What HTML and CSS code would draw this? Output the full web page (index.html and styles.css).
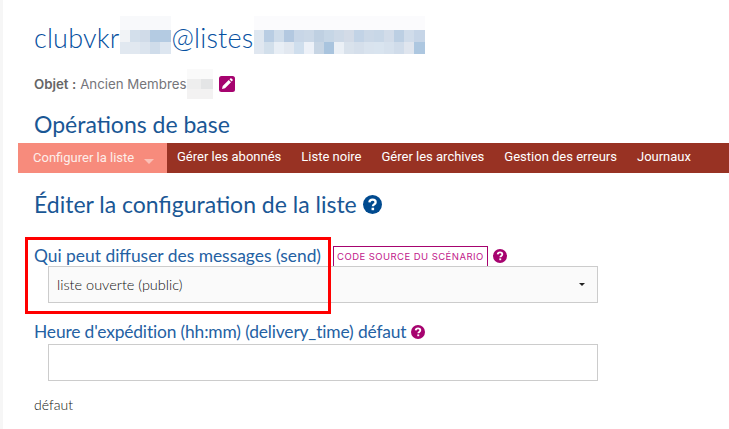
FILE: index.html
```html
<!DOCTYPE html>
<html lang="fr">
  <head>
    <meta charset="UTF-8" />
    <meta name="viewport" content="width=device-width, initial-scale=1" />
    <title>Éditer la configuration de la liste</title>
    <link rel="stylesheet" href="styles.css">
  </head>
  <body>
    <main class="page">
      <header class="list-head">
        <h1 class="list-name">
          <span>clubvkr</span>
          <svg class="blur blur-short" width="51" height="38" viewBox="0 0 51 38">
            <rect x="0" y="0" width="51" height="14" fill="#f8f9fb" />
            <rect x="0" y="14" width="10" height="12" fill="#f1f3f6" />
            <rect x="10" y="14" width="10" height="12" fill="#d3dfeb" />
            <rect x="20" y="14" width="10" height="12" fill="#d0dbe8" />
            <rect x="30" y="14" width="21" height="12" fill="#b4cbe2" />
            <rect x="0" y="26" width="20" height="12" fill="#e1e8f0" />
            <rect x="20" y="26" width="10" height="12" fill="#dbe4ee" />
            <rect x="30" y="26" width="10" height="12" fill="#cfdcea" />
            <rect x="40" y="26" width="11" height="12" fill="#dde6f0" />
          </svg>
          <span>@listes</span>
          <svg class="blur blur-long" width="171" height="38" viewBox="0 0 171 38">
            <rect x="0" y="0" width="171" height="14" fill="#fbfbfd" />
            <rect x="0" y="14" width="10" height="12" fill="#dfe7f0" />
            <rect x="10" y="14" width="10" height="12" fill="#b9cde3" />
            <rect x="20" y="14" width="10" height="12" fill="#cfdcea" />
            <rect x="30" y="14" width="10" height="12" fill="#b3c8e0" />
            <rect x="40" y="14" width="10" height="12" fill="#c8d6e7" />
            <rect x="50" y="14" width="10" height="12" fill="#cbd8e7" />
            <rect x="60" y="14" width="10" height="12" fill="#bfd0e2" />
            <rect x="70" y="14" width="10" height="12" fill="#c6d6e6" />
            <rect x="80" y="14" width="10" height="12" fill="#cdd9e7" />
            <rect x="90" y="14" width="10" height="12" fill="#d3dbe7" />
            <rect x="100" y="14" width="10" height="12" fill="#c2d3e6" />
            <rect x="110" y="14" width="10" height="12" fill="#cbd8e7" />
            <rect x="120" y="14" width="10" height="12" fill="#c8d7e7" />
            <rect x="130" y="14" width="10" height="12" fill="#d2dce9" />
            <rect x="140" y="14" width="10" height="12" fill="#bccfe3" />
            <rect x="150" y="14" width="10" height="12" fill="#d0dcea" />
            <rect x="160" y="14" width="11" height="12" fill="#c6d5e7" />
            <rect x="0" y="26" width="10" height="12" fill="#e0e7f0" />
            <rect x="10" y="26" width="10" height="12" fill="#d2dfeb" />
            <rect x="20" y="26" width="10" height="12" fill="#e8eef5" />
            <rect x="30" y="26" width="10" height="12" fill="#e2e8f0" />
            <rect x="40" y="26" width="10" height="12" fill="#cfdeed" />
            <rect x="50" y="26" width="10" height="12" fill="#edf1f8" />
            <rect x="60" y="26" width="10" height="12" fill="#c7d5e4" />
            <rect x="70" y="26" width="10" height="12" fill="#a9c4de" />
            <rect x="80" y="26" width="10" height="12" fill="#ebf0f6" />
            <rect x="90" y="26" width="10" height="12" fill="#d9e2ec" />
            <rect x="100" y="26" width="10" height="12" fill="#d5dfeb" />
            <rect x="110" y="26" width="10" height="12" fill="#d9e3ee" />
            <rect x="120" y="26" width="10" height="12" fill="#d9e4ef" />
            <rect x="130" y="26" width="10" height="12" fill="#d6e1ed" />
            <rect x="140" y="26" width="10" height="12" fill="#d0dcea" />
            <rect x="150" y="26" width="10" height="12" fill="#dfe5ee" />
            <rect x="160" y="26" width="11" height="12" fill="#adc7e0" />
          </svg>
        </h1>
        <p class="subject">
          <strong>Objet :</strong>
          <span>Ancien Membres</span>
          <svg class="blur" width="26" height="30" viewBox="0 0 26 30">
            <rect width="26" height="10" fill="#fafafa" />
            <rect y="10" width="14" height="10" fill="#eeeeee" />
            <rect x="14" y="10" width="12" height="10" fill="#e4e5e6" />
            <rect y="20" width="26" height="10" fill="#f3f2f2" />
          </svg>
          <svg class="edit-icon" width="16" height="16" viewBox="0 0 16 16">
            <rect width="16" height="16" rx="2.5" fill="#a6036f" />
            <path d="M3 13l.7-3 6-6 2.300 2.300-6 6zM10.500 3.300l.9-.9c.3-.3.7-.3 1 0l1.200 1.200c.3.300.3.700 0 1l-.9.900z" fill="#fff" />
          </svg>
        </p>
      </header>

      <h2 class="section-title">Opérations de base</h2>
      <nav class="menu">
        <a class="menu-item active" href="#">Configurer la liste <i class="caret"></i></a>
        <a class="menu-item" href="#">Gérer les abonnés</a>
        <a class="menu-item" href="#">Liste noire</a>
        <a class="menu-item" href="#">Gérer les archives</a>
        <a class="menu-item" href="#">Gestion des erreurs</a>
        <a class="menu-item" href="#">Journaux</a>
      </nav>

      <h2 class="edit-title">
        Éditer la configuration de la liste
        <svg class="help help-big" width="19" height="19" viewBox="0 0 20 20">
          <circle cx="10" cy="10" r="10" fill="currentColor" />
          <path d="M6.700 7.700c.2-1.900 1.500-2.800 3.300-2.800 1.900 0 3.300 1.100 3.300 2.700 0 2.300-2.900 2.300-2.900 4.300" fill="none" stroke="#fff" stroke-width="2.400" />
          <rect x="9" y="13.400" width="2.700" height="2.600" fill="#fff" />
        </svg>
      </h2>

      <form class="config">
        <div class="field">
          <div class="field-label">
            <label for="send">Qui peut diffuser des messages (send)</label>
            <a class="scenario-link" href="#">Code source du scénario</a>
            <svg class="help" width="14" height="14" viewBox="0 0 20 20">
              <circle cx="10" cy="10" r="10" fill="currentColor" />
              <path d="M6.700 7.700c.2-1.900 1.500-2.800 3.300-2.800 1.900 0 3.300 1.100 3.300 2.700 0 2.300-2.900 2.300-2.900 4.300" fill="none" stroke="#fff" stroke-width="2.600" />
              <rect x="9" y="13.400" width="2.700" height="2.600" fill="#fff" />
            </svg>
          </div>
          <div class="select-box" id="send">
            <span>liste ouverte (public)</span>
            <i class="select-arrow"></i>
          </div>
        </div>

        <div class="field field-time">
          <div class="field-label">
            <label for="delivery">Heure d'expédition (hh:mm) (delivery_time) défaut</label>
            <svg class="help" width="14" height="14" viewBox="0 0 20 20">
              <circle cx="10" cy="10" r="10" fill="currentColor" />
              <path d="M6.700 7.700c.2-1.900 1.500-2.800 3.300-2.800 1.900 0 3.300 1.100 3.300 2.700 0 2.300-2.900 2.300-2.900 4.300" fill="none" stroke="#fff" stroke-width="2.600" />
              <rect x="9" y="13.400" width="2.700" height="2.600" fill="#fff" />
            </svg>
          </div>
          <input class="text-input" id="delivery" type="text" />
        </div>

        <p class="default-note">défaut</p>
        <div class="highlight"></div>
      </form>
    </main>
  </body>
</html>
```

FILE: styles.css
```css
/*—— page ——*/
html,
body {
  margin: 0;
  padding: 0;
  height: 100%;
  background: #fff;
}

body {
  overflow: hidden;
  font-family: "Lato", "Noto Sans", sans-serif;
  color: #444;
}

.page {
  height: 429px;
  border-left: 3px solid #f6f6f6;
  box-sizing: border-box;
}

.blur {
  display: block;
  flex: none;
}

/*—— list header ——*/
.list-head {
  padding-left: 31px;
}

.list-name {
  display: flex;
  align-items: flex-start;
  margin: 0;
  padding-top: 16px;
  height: 38px;
  font-size: 27px;
  font-weight: 300;
  line-height: 44px;
  letter-spacing: 0.2px;
  color: #0650a0;
}

.list-name .blur-short {
  margin-left: 1px;
}

.list-name .blur-long {
  margin-left: 1px;
}

.subject {
  display: flex;
  align-items: center;
  gap: 4px;
  margin: 15px 0 0;
  height: 30px;
  font-family: "Inter", sans-serif;
  font-size: 13.300px;
  color: #75757a;
}

.subject strong {
  color: #666;
  font-weight: 600;
}

.subject .blur {
  margin-left: -3px;
  margin-right: 2px;
}

.edit-icon {
  display: block;
}

/*—— headings ——*/
.section-title,
.edit-title {
  margin: 0;
  padding-left: 31px;
  font-size: 23px;
  font-weight: 400;
  color: #1a5795;
}

.section-title {
  padding-top: 10px;
  height: 34px;
  line-height: 30px;
}

.edit-title {
  display: flex;
  align-items: center;
  gap: 6px;
  margin-top: 17px;
  height: 28px;
  line-height: 28px;
}

.help {
  display: block;
  flex: none;
  color: #a6036f;
}

.help-big {
  color: #004a8f;
}

/*—— menu ——*/
.menu {
  display: flex;
  margin: 0 0 0 15px;
  height: 30px;
  background: #983223;
}

.menu-item {
  display: block;
  padding: 0 10px;
  font-family: "Roboto", sans-serif;
  font-size: 13px;
  line-height: 28px;
  color: #fff;
  text-decoration: none;
}

.menu-item.active {
  display: flex;
  gap: 10px;
  align-items: center;
  box-sizing: border-box;
  width: 149px;
  padding: 0 0 0 15px;
  background: #f78b7c;
  color: #fdeeea;
}

.caret {
  display: block;
  margin-top: 6px;
  border-style: solid;
  border-width: 5px 5.500px 0;
  border-color: #fbc0b6 transparent transparent;
}

/*—— form ——*/
.config {
  position: relative;
  margin-top: 27px;
  padding-left: 31px;
}

.field {
  display: flex;
  flex-direction: column;
}

.field-label {
  display: flex;
  align-items: center;
  height: 21px;
  font-size: 17.400px;
  color: #2461a3;
}

.field-label .help {
  margin-left: 5px;
}

.field-time .field-label {
  letter-spacing: -0.15px;
}

.scenario-link {
  align-self: flex-end;
  box-sizing: border-box;
  height: 20px;
  margin-left: 12px;
  padding: 0 3px;
  border: 1px solid #a6036f;
  border-bottom: 0;
  font-family: "Inter", sans-serif;
  font-size: 9.500px;
  line-height: 19px;
  letter-spacing: 0.45px;
  text-transform: uppercase;
  color: #c1188a;
  text-decoration: none;
  white-space: nowrap;
}

.select-box,
.text-input {
  box-sizing: border-box;
  width: 550px;
  margin-left: 14px;
  border: 1px solid #ccc;
}

.select-box {
  display: flex;
  align-items: center;
  justify-content: space-between;
  height: 37px;
  padding: 0 12px 0 8px;
  background: #fafafa;
  font-size: 14.500px;
  font-weight: 300;
  color: #111;
}

.select-arrow {
  display: block;
  border-style: solid;
  border-width: 3px 3px 0;
  border-color: #222 transparent transparent;
}

.field-time {
  margin-top: 18px;
}

.text-input {
  display: block;
  height: 37px;
  margin-top: 2px;
  padding: 0;
  background: #fff;
}

.default-note {
  margin: 16px 0 0;
  font-size: 14px;
  font-weight: 300;
  line-height: 16px;
  color: #111;
}

/*—— red marker drawn over the form ——*/
.highlight {
  position: absolute;
  top: -8px;
  left: 22px;
  width: 306px;
  height: 77px;
  box-sizing: border-box;
  border: 3px solid #f00;
}
```
